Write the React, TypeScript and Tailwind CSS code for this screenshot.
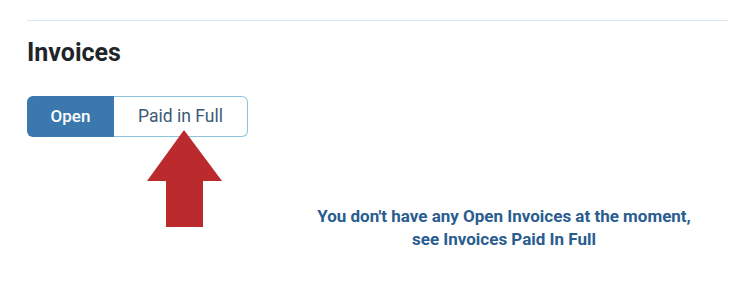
export default function App() {
  return (
    <div className="relative w-[730px] h-[282px] bg-white pl-[27px] pr-[2px] pt-[20px] font-['Roboto',sans-serif]">
      <div className="border-t border-[#d4e8f0]" />
      <h2 className="mt-[17px] text-[25px] leading-[30px] font-bold text-[#212529]">Invoices</h2>

      <div className="mt-[28px] flex">
        <button className="h-[41px] w-[87px] rounded-l-[6px] bg-[#3a78ad] text-[17px] font-medium text-white">
          Open
        </button>
        <button className="h-[41px] w-[134px] rounded-r-[6px] border border-l-0 border-[#8cc4de] bg-white text-[17.5px] text-[#3c5a78]">
          Paid in Full
        </button>
      </div>

      <div className="ml-[253px] mt-[68px] text-center text-[17px] leading-[23px] font-bold text-[#2a5d8f]">
        <p>You don't have any Open Invoices at the moment,</p>
        <p>see Invoices Paid In Full</p>
      </div>

      <svg className="absolute left-0 top-0" width="730" height="282" viewBox="0 0 730 282">
        <polygon
          points="184,130 222,181 203,181 203,227 166,227 166,181 147,181"
          fill="#bb2a2d"
        />
      </svg>
    </div>
  );
}
